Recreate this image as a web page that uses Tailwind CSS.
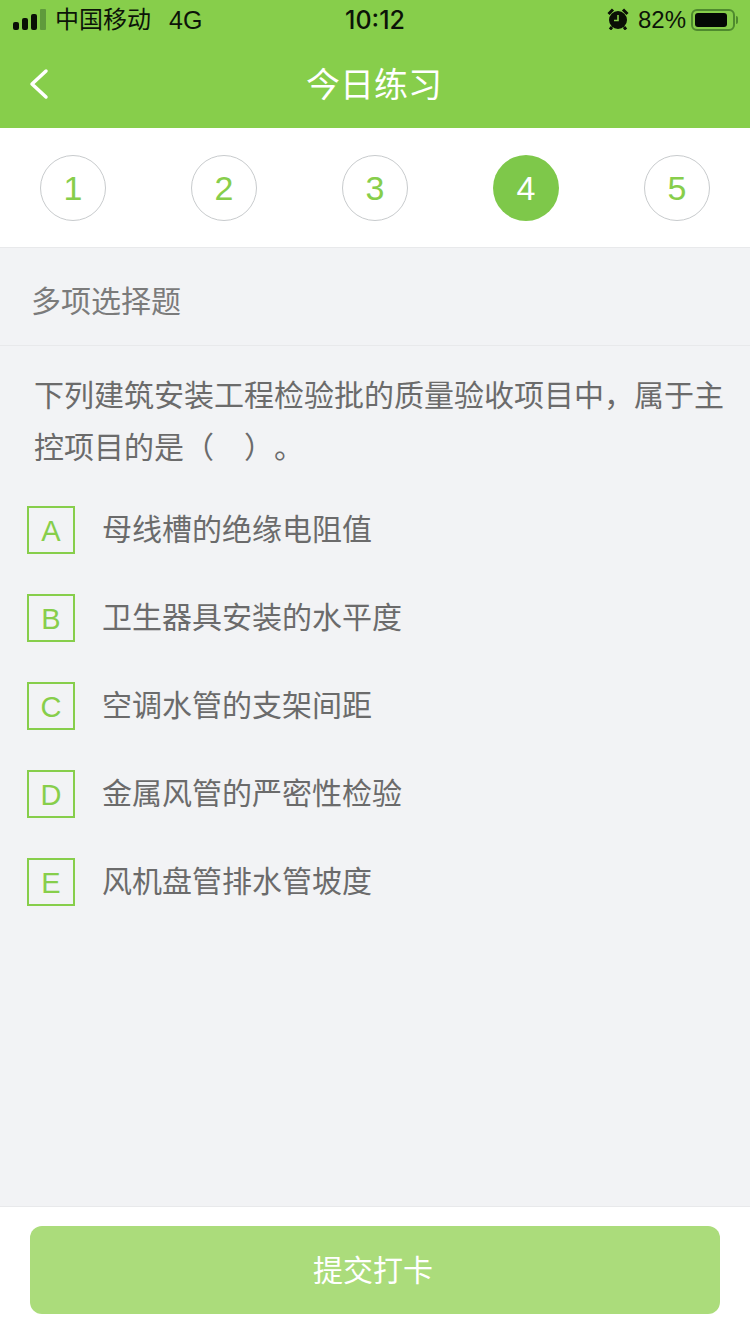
<!DOCTYPE html>
<html lang="zh">

<head>
    <meta charset="UTF-8">
    <meta name="viewport" content="width=device-width, initial-scale=1.0">
    <script src="https://cdn.jsdelivr.net/npm/@tailwindcss/browser@4"></script>
    <title>今日练习</title>
</head>

<body class="font-['Liberation_Sans','Noto_Sans_CJK_SC',sans-serif]">
    <div class="w-[750px] h-[1334px] flex flex-col bg-[#f2f3f5] overflow-hidden">

        <!-- header -->
        <div class="h-[128px] shrink-0 bg-[#87ce4b] flex flex-col">
            <div class="h-[40px] pl-[13px] pr-[12px] flex items-center justify-between relative text-[#0c1408]">
                <div class="flex items-center">
                    <svg width="33" height="21" viewBox="0 0 33 21" class="mr-[9px] mb-[1px]">
                        <rect x="0" y="13" width="6" height="8" rx="2" fill="#0a0f06" />
                        <rect x="9" y="9" width="6" height="12" rx="2" fill="#0a0f06" />
                        <rect x="18" y="5" width="6" height="16" rx="2" fill="#0a0f06" />
                        <rect x="27" y="0" width="6" height="21" rx="1" fill="#5f9a3c" />
                    </svg>
                    <span class="text-[24px] leading-none">中国移动</span>
                    <span class="text-[25px] leading-none ml-[18px]">4G</span>
                </div>
                <div class="absolute left-0 right-0 text-center font-['Inter'] text-[25px] font-medium leading-none">10:12</div>
                <div class="flex items-center">
                    <svg width="22" height="22" viewBox="0 0 22 22" class="mr-[9px] mb-[2px]">
                        <circle cx="11" cy="12" r="9" fill="#0a0f06" />
                        <path d="M11 7v5.500H7" stroke="#87ce4b" stroke-width="1.600" fill="none" />
                        <path d="M1.500 6 6 1.500M20.500 6 16 1.500M5 19l-2 2.500M17 19l2 2.500" stroke="#0a0f06" stroke-width="3" fill="none" />
                    </svg>
                    <span class="text-[24px] leading-none">82%</span>
                    <div class="ml-[5px] w-[44px] h-[22px] rounded-[6px] border-2 border-[#4f8a2e] p-[2px]">
                        <div class="w-[32px] h-full rounded-[3px] bg-[#050805]"></div>
                    </div>
                    <div class="ml-[1px] w-[2px] h-[8px] rounded-r-sm bg-[#4f8a2e]"></div>
                </div>
            </div>
            <div class="h-[88px] relative flex items-center justify-center pr-[2px] pt-[1px]">
                <svg width="20" height="32" viewBox="0 0 20 32" class="absolute left-[29px] top-[28px]">
                    <path d="M17 3 3 16l14 13" stroke="#fff" stroke-width="3.500" fill="none" stroke-linecap="round" stroke-linejoin="round" />
                </svg>
                <span class="text-[34px] leading-none text-white">今日练习</span>
            </div>
        </div>

        <!-- steps -->
        <div class="h-[120px] shrink-0 bg-white border-b border-[#e8e9eb] px-[40px] pt-[1px] flex items-center justify-between">
            <div class="w-[66px] h-[66px] rounded-full border border-[#c8cbcd] flex items-center justify-center text-[34px] text-[#87ce4b]">1</div>
            <div class="w-[66px] h-[66px] rounded-full border border-[#c8cbcd] flex items-center justify-center text-[34px] text-[#87ce4b]">2</div>
            <div class="w-[66px] h-[66px] rounded-full border border-[#c8cbcd] flex items-center justify-center text-[34px] text-[#87ce4b]">3</div>
            <div class="w-[66px] h-[66px] rounded-full bg-[#7ec84a] flex items-center justify-center text-[34px] text-white">4</div>
            <div class="w-[66px] h-[66px] rounded-full border border-[#c8cbcd] flex items-center justify-center text-[34px] text-[#87ce4b]">5</div>
        </div>

        <!-- question -->
        <div class="flex-1 flex flex-col">
            <div class="h-[98px] shrink-0 pl-[31px] pt-[10px] flex items-center border-b border-[#e8e9eb] text-[30px] text-[#7b7b7b]">多项选择题</div>
            <div class="pl-[34px] pr-[24px] pt-[24px] text-[30px] leading-[52px] text-[#6b6b6b] [text-spacing-trim:space-all]">下列建筑安装工程检验批的质量验收项目中，属于主控项目的是（　）。</div>

            <div class="mt-[32px] pl-[27px] flex flex-col gap-[40px]">
                <div class="flex items-center h-[48px]">
                    <div class="w-[48px] h-[48px] pt-[3px] border-2 border-[#87ce4b] flex items-center justify-center text-[29px] text-[#87ce4b]">A</div>
                    <span class="ml-[27px] text-[30px] leading-none text-[#6b6b6b]">母线槽的绝缘电阻值</span>
                </div>
                <div class="flex items-center h-[48px]">
                    <div class="w-[48px] h-[48px] pt-[3px] border-2 border-[#87ce4b] flex items-center justify-center text-[29px] text-[#87ce4b]">B</div>
                    <span class="ml-[27px] text-[30px] leading-none text-[#6b6b6b]">卫生器具安装的水平度</span>
                </div>
                <div class="flex items-center h-[48px]">
                    <div class="w-[48px] h-[48px] pt-[3px] border-2 border-[#87ce4b] flex items-center justify-center text-[29px] text-[#87ce4b]">C</div>
                    <span class="ml-[27px] text-[30px] leading-none text-[#6b6b6b]">空调水管的支架间距</span>
                </div>
                <div class="flex items-center h-[48px]">
                    <div class="w-[48px] h-[48px] pt-[3px] border-2 border-[#87ce4b] flex items-center justify-center text-[29px] text-[#87ce4b]">D</div>
                    <span class="ml-[27px] text-[30px] leading-none text-[#6b6b6b]">金属风管的严密性检验</span>
                </div>
                <div class="flex items-center h-[48px]">
                    <div class="w-[48px] h-[48px] pt-[3px] border-2 border-[#87ce4b] flex items-center justify-center text-[29px] text-[#87ce4b]">E</div>
                    <span class="ml-[27px] text-[30px] leading-none text-[#6b6b6b]">风机盘管排水管坡度</span>
                </div>
            </div>
        </div>

        <!-- footer -->
        <div class="h-[128px] shrink-0 bg-white border-t border-[#e8e9eb] px-[30px] pt-[19px]">
            <button class="w-full h-[88px] pr-[4px] rounded-[12px] bg-[#abdc7b] text-white text-[30px]">提交打卡</button>
        </div>
    </div>
</body>

</html>
